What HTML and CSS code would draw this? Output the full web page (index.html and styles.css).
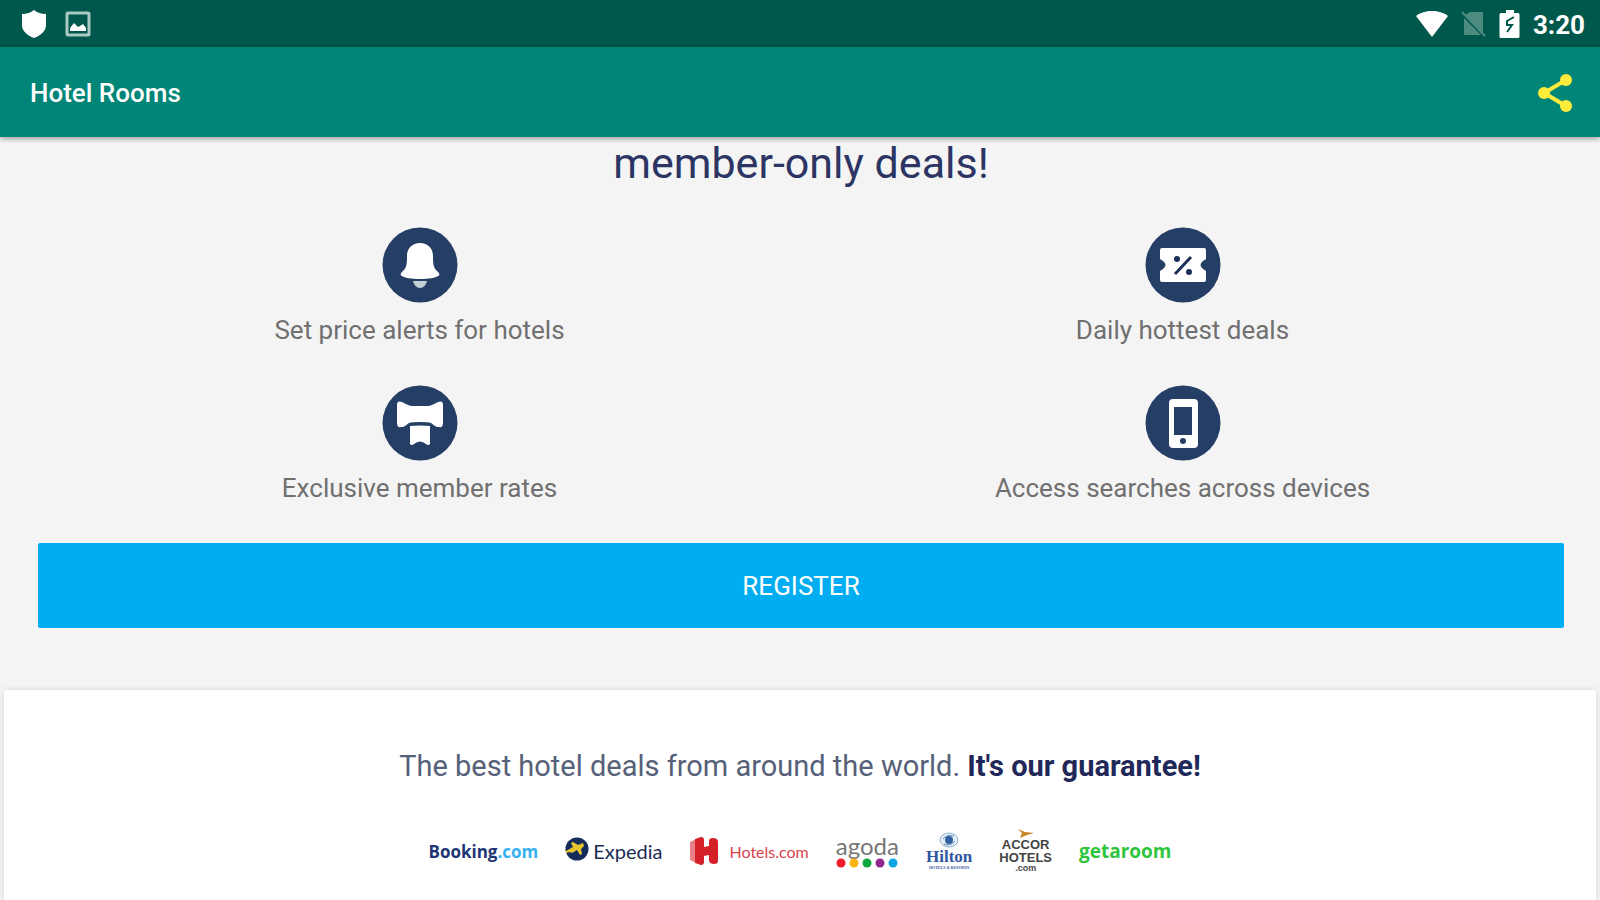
FILE: index.html
```html
<!DOCTYPE html>
<html lang="en">
<head>
    <meta charset="UTF-8">
    <meta name="viewport" content="width=device-width, initial-scale=1.0">
    <title>Hotel Rooms</title>
    <link rel="stylesheet" href="styles.css">
</head>
<body>
    <div class="status-bar">
        <div class="status-group">
            <svg width="26" height="30" viewBox="0 0 26 30"><path d="M13 1C10 3.500 5.500 5 1 5v11c0 6 5 10.500 12 13 7-2.500 12-7 12-13V5C20.500 5 16 3.500 13 1z" fill="#fff"/></svg>
            <svg width="26" height="26" viewBox="0 0 26 26"><rect x="2" y="2" width="22" height="22" rx="1" fill="none" stroke="#a9c9c3" stroke-width="3"/><path d="M5 20v-3l4-5 4 4 2-1 3-2 3 4v3z" fill="#fff"/></svg>
        </div>
        <div class="status-group status-right">
            <svg width="34" height="28" viewBox="0 0 34 28"><path d="M1 6C5 2.500 11 1 17 1s12 1.500 16 5L17 27z" fill="#fff"/></svg>
            <svg width="26" height="28" viewBox="0 0 26 28"><path d="M9 2h13v21L4 5zM3 8l17 17H3z" fill="#4d8a80"/><path d="M1 2l23 24" stroke="#4d8a80" stroke-width="2"/></svg>
            <svg width="22" height="30" viewBox="0 0 22 30"><path d="M7 1h8v3h4a1.500 1.500 0 0 1 1.500 1.500v22A1.500 1.500 0 0 1 19 29H2a1.500 1.500 0 0 1-1.500-1.500v-22A1.500 1.500 0 0 1 2 4h5z" fill="#fff"/><path d="M15 8l-7 4v4h5l-5 7" fill="none" stroke="#00574b" stroke-width="2"/></svg>
            <span class="clock">3:20</span>
        </div>
    </div>

    <header class="app-bar">
        <h1>Hotel Rooms</h1>
        <button class="share" aria-label="Share">
            <svg width="36" height="40" viewBox="0 0 36 40"><path d="M29 7L7 20l22 13" fill="none" stroke="#ffeb3b" stroke-width="4"/><circle cx="29" cy="7" r="6" fill="#ffeb3b"/><circle cx="7" cy="20" r="6" fill="#ffeb3b"/><circle cx="29" cy="33" r="6" fill="#ffeb3b"/></svg>
        </button>
    </header>

    <section class="members">
        <h2>member-only deals!</h2>
        <ul class="benefits">
            <li>
                <svg width="76" height="76" viewBox="0 0 76 76"><circle cx="38" cy="38" r="37.500" fill="#253e66"/><path d="M38 16c-8 0-13 5.500-13 13 0 8-.5 12-4 15-2 2-3 3-2 4.500C22 51 30 52 38 52s16-1 19-3.500c1-1.500 0-2.500-2-4.500-3.500-3-4-7-4-15 0-7.500-5-13-13-13z" fill="#fff"/><path d="M31 54h14c-1 4-3.500 7-7 7s-6-3-7-7z" fill="#c5cfd6"/></svg>
                <span>Set price alerts for hotels</span>
            </li>
            <li>
                <svg width="76" height="76" viewBox="0 0 76 76"><circle cx="38" cy="38" r="37.500" fill="#253e66"/><path d="M17 21h42a2 2 0 0 1 2 2v9l-3 2q-5 4 0 8l3 2v9a2 2 0 0 1-2 2H17a2 2 0 0 1-2-2v-9l3-2q5-4 0-8l-3-2v-9a2 2 0 0 1 2-2z" fill="#fff"/><path d="M30 47l16-17" stroke="#1b2f57" stroke-width="3"/><circle cx="32" cy="32" r="3" fill="#1b2f57"/><circle cx="44" cy="45" r="3" fill="#1b2f57"/></svg>
                <span>Daily hottest deals</span>
            </li>
            <li>
                <svg width="76" height="76" viewBox="0 0 76 76"><circle cx="38" cy="38" r="37.500" fill="#253e66"/><path d="M15 20q0-5 5-3c4 2 7 4 11 4h14c4 0 7-2 11-4q5-2 5 3v18q0 5-4 4c-4 0-5-2-8-4q-3-1-11-1t-11 1c-3 2-4 4-8 4q-4 1-4-4z" fill="#fff"/><path d="M28 41q10-1 20 0v18q-2 2-4 0-6-5-12 0-2 2-4 0z" fill="#fff"/></svg>
                <span>Exclusive member rates</span>
            </li>
            <li>
                <svg width="76" height="76" viewBox="0 0 76 76"><circle cx="38" cy="38" r="37.500" fill="#253e66"/><rect x="24" y="14" width="29" height="49" rx="4" fill="#fff"/><rect x="29" y="22" width="18" height="28" fill="#253e66"/><circle cx="38" cy="56" r="3" fill="#253e66"/></svg>
                <span>Access searches across devices</span>
            </li>
        </ul>
        <button class="register">REGISTER</button>
    </section>

    <section class="guarantee">
        <p>The best hotel deals from around the world. <strong>It's our guarantee!</strong></p>
        <ul class="partners">
            <li class="booking">Booking<span>.com</span></li>
            <li class="expedia">
                <svg width="24" height="28" viewBox="0 0 24 28"><circle cx="12" cy="12" r="11.500" fill="#152c5b"/><path d="M1 14l7-4-2-4 2-1 5 3 5-2 1 3-3 3 1 5-2 1-3-5-5 3-2-1-4 1z" fill="#e5c52e"/></svg>
                <span>Expedia</span>
            </li>
            <li class="hotels">
                <svg width="28" height="28" viewBox="0 0 28 28"><path d="M0 5l6-3v24l-6-3z" fill="#e98087"/><path d="M5 2l6-2q3 0 3 3v7l5-1V4q0-3 4-3t5 3v20q0 3-4 3t-5-3v-6l-5 1v6q0 3-3 3l-6-2z" fill="#d32029"/></svg>
                <span>Hotels.com</span>
            </li>
            <li class="agoda">
                <span>agoda</span>
                <svg width="62" height="10" viewBox="0 0 62 10"><circle cx="5" cy="5" r="4.500" fill="#ee1c2e"/><circle cx="18" cy="5" r="4.500" fill="#fdb515"/><circle cx="31" cy="5" r="4.500" fill="#0ca73d"/><circle cx="44" cy="5" r="4.500" fill="#93278f"/><circle cx="57" cy="5" r="4.500" fill="#12a5e4"/></svg>
            </li>
            <li class="hilton">
                <svg width="20" height="16" viewBox="0 0 20 16"><ellipse cx="10" cy="8" rx="9" ry="7" fill="#e3eef7" stroke="#8fb0d3"/><path d="M4 7q4-5 11-3M5 12q6 3 11-3" fill="none" stroke="#6089bd"/><circle cx="10" cy="8" r="4" fill="#315f9f"/></svg>
                <span>Hilton</span>
                <small>HOTELS &amp; RESORTS</small>
            </li>
            <li class="accor">
                <svg width="18" height="9" viewBox="0 0 18 9"><path d="M1 0l7 3 9 1-7 2-7 3 2-5z" fill="#c88524"/></svg>
                <span>ACCOR</span>
                <span>HOTELS</span>
                <small>.com</small>
            </li>
            <li class="getaroom">getaroom</li>
        </ul>
    </section>
</body>
</html>
```
FILE: styles.css
```css
* {
    margin: 0;
    padding: 0;
    box-sizing: border-box;
}

body {
    display: flex;
    flex-direction: column;
    min-height: 100vh;
    font-family: Roboto, "Liberation Sans", sans-serif;
    background: #f4f4f4;
    color: #707070;
}

ul {
    list-style: none;
}

svg {
    display: block;
    flex-shrink: 0;
}

button {
    border: none;
    font-family: inherit;
    cursor: pointer;
}

.status-bar {
    display: flex;
    justify-content: space-between;
    height: 47px;
    padding: 0 15px 0 21px;
    background: #00574b;
}

.status-group {
    display: flex;
    align-items: center;
    gap: 18px;
}

.status-right {
    gap: 12px;
}

.clock {
    font-size: 26px;
    font-weight: 700;
    line-height: 32px;
    padding-top: 3px;
    color: #fff;
}

.app-bar {
    display: flex;
    align-items: center;
    justify-content: space-between;
    height: 90px;
    padding: 2px 27px 0 30px;
    background: #008577;
    box-shadow: 0 2px 5px rgba(0, 0, 0, 0.35);
}

.app-bar h1 {
    font-size: 26px;
    font-weight: 500;
    color: #fff;
}

.share {
    background: none;
}

.members {
    padding: 0 36px 62px 38px;
}

.members h2 {
    font-size: 43px;
    font-weight: 400;
    line-height: 52px;
    text-align: center;
    color: #2b3463;
}

.benefits {
    display: grid;
    grid-template-columns: 1fr 1fr;
    padding-top: 38px;
}

.benefits li {
    display: flex;
    flex-direction: column;
    align-items: center;
    gap: 11px;
    height: 158px;
    font-size: 26px;
    line-height: 32px;
}

.register {
    display: block;
    width: 100%;
    height: 85px;
    border-radius: 2px;
    background: #00adf0;
    color: #fff;
    font-size: 26px;
}

.guarantee {
    flex: 1;
    margin: 0 4px;
    padding: 58px 0 20px;
    background: #fff;
    box-shadow: 0 0 6px rgba(0, 0, 0, 0.12);
    text-align: center;
}

.guarantee p {
    font-size: 29px;
    line-height: 36px;
    color: #566079;
}

.guarantee strong {
    color: #1f2858;
}

.partners {
    display: flex;
    align-items: center;
    justify-content: center;
    gap: 27px;
    padding-top: 45px;
}

.partners li {
    display: flex;
    align-items: center;
}

.booking,
.getaroom {
    font-family: "Open Sans", sans-serif;
    font-size: 17px;
    font-weight: 700;
}

.booking {
    color: #1e3475;
}

.booking span {
    color: #35b1ee;
}

.expedia {
    gap: 4px;
    font-family: Lato, sans-serif;
    font-size: 20px;
    color: #1b2d55;
}

.hotels {
    gap: 12px;
    font-family: Lato, sans-serif;
    font-size: 16px;
    color: #d8434d;
}

.partners .agoda,
.partners .hilton,
.partners .accor {
    flex-direction: column;
}

.agoda {
    font-family: Lato, sans-serif;
    font-size: 24px;
    line-height: 24px;
    color: #777;
}

.hilton {
    font-family: "Liberation Serif", serif;
    font-size: 17px;
    font-weight: 700;
    line-height: 17px;
    color: #3056a0;
}

.accor {
    font-family: "Liberation Sans", sans-serif;
    font-size: 13px;
    font-weight: 700;
    line-height: 13px;
    color: #444;
}

.partners small {
    font-size: 4px;
    line-height: 6px;
}

.partners .accor small {
    font-size: 9px;
    line-height: 9px;
}

.partners .getaroom {
    font-size: 19px;
    color: #2ec63c;
}
```
